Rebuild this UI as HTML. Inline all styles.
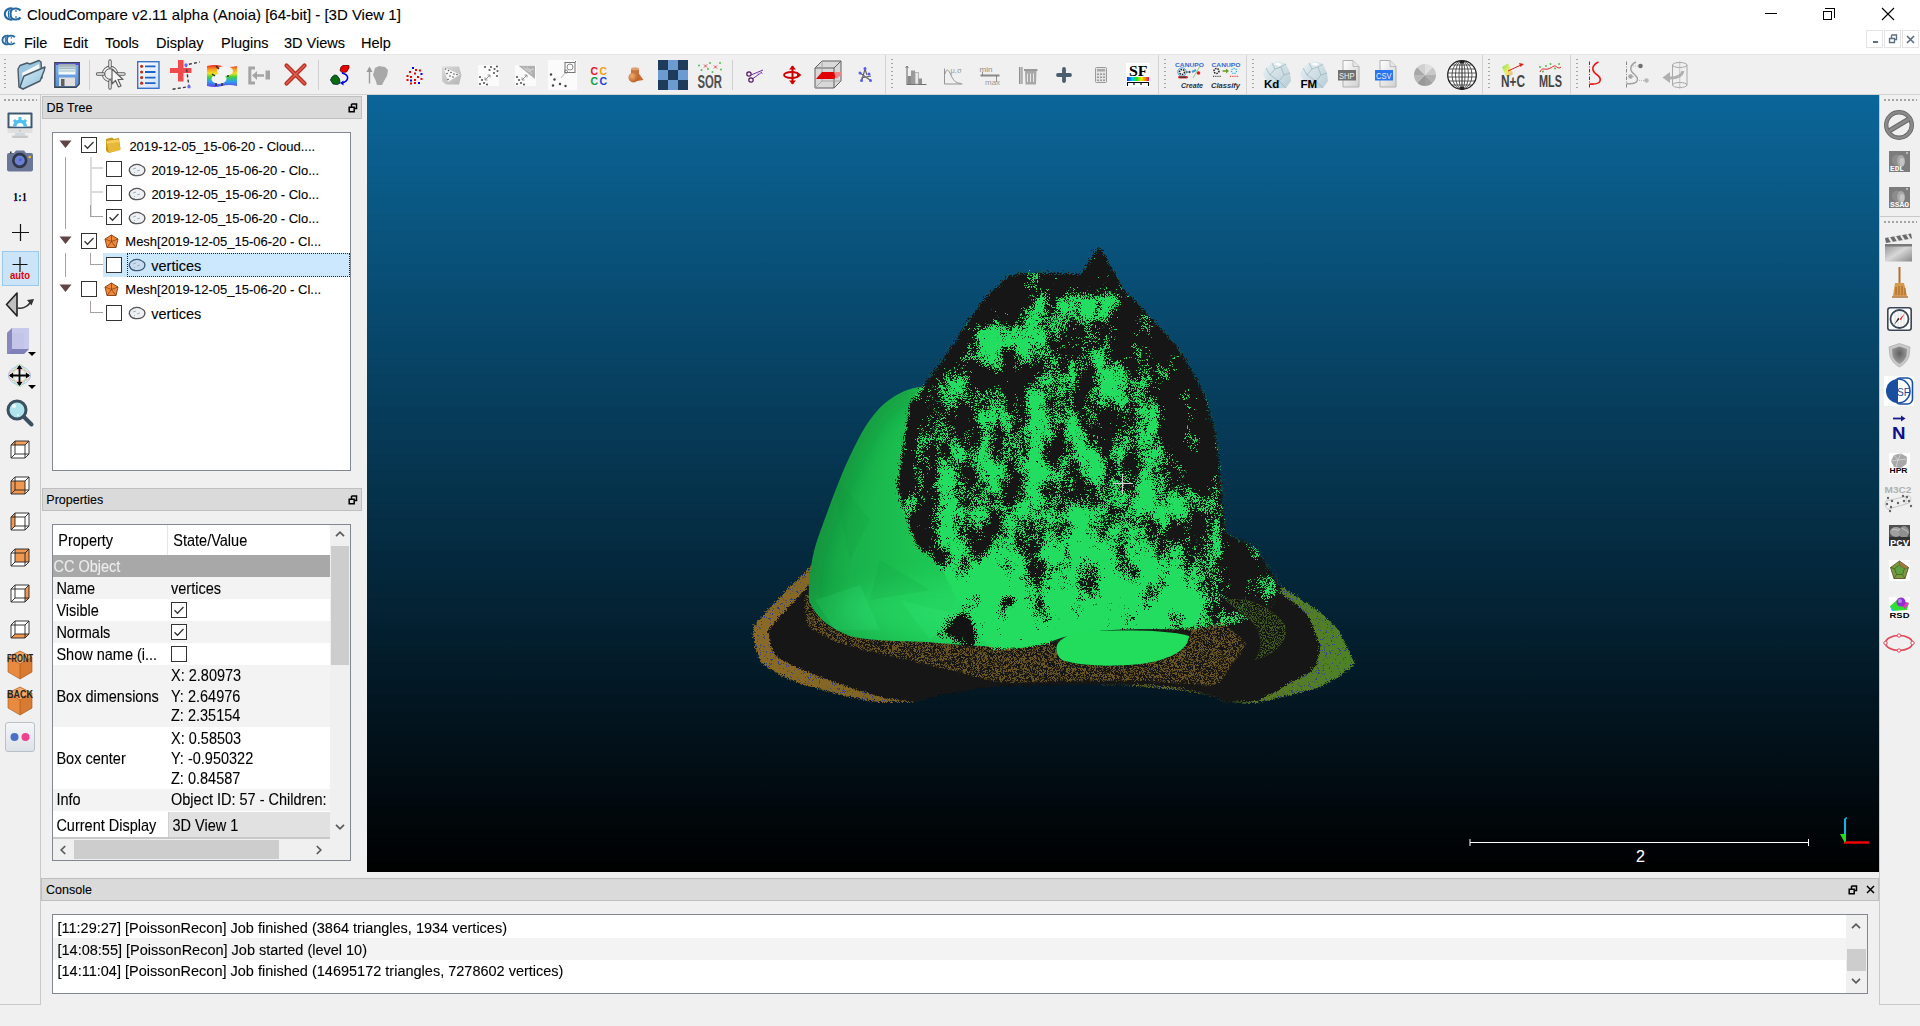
<!DOCTYPE html>
<html><head><meta charset="utf-8"><title>CloudCompare</title>
<style>
*{margin:0;padding:0;box-sizing:border-box}
html,body{width:1920px;height:1026px;overflow:hidden;background:#f0f0f0;font-family:"Liberation Sans",sans-serif;color:#000}
.a{position:absolute}
.t{position:absolute;white-space:pre;line-height:1}
svg.a{overflow:visible}
.dockt{position:absolute;background:#dadada;border:1px solid #bfbfbf}
.box{position:absolute;background:#fff;border:1px solid #828790}
.cb{position:absolute;width:16px;height:16px;border:1px solid #333;background:#fff}
.hdl{background-image:linear-gradient(#a0a0a0,#a0a0a0);background-size:2px 2px;background-repeat:no-repeat;}
.hdl{background:repeating-linear-gradient(to bottom,#a4a4a4 0 1.5px,transparent 1.5px 4px);width:2px!important}
.hdlh{background:repeating-linear-gradient(to right,#a4a4a4 0 2px,transparent 2px 4px);height:2px!important}
.t{-webkit-text-stroke:0.1px currentColor}

</style></head><body>
<!-- title bar -->
<div class="a" style="left:0;top:0;width:1920px;height:54px;background:#fff"></div>
<svg class="a" style="left:3px;top:7px" width="19" height="14" viewBox="0 0 19 14">
 <path d="M9.5,1.5 C6,1 2,2.5 1.8,7 C2,11.5 6,13 9.5,12.5" fill="none" stroke="#2468a4" stroke-width="2.1"/>
 <path d="M6.5,3 C5,4.5 5,9.5 6.5,11" fill="none" stroke="#2468a4" stroke-width="1.2"/>
 <path d="M17.5,3.5 C15.5,1 11,1 9,2.5 C7,4.5 7,9.5 9,11.5 C11,13 15.5,13 17.5,10.5" fill="none" stroke="#2468a4" stroke-width="2.1"/>
 <path d="M13,3 V5 M13,9 V11" stroke="#2468a4" stroke-width="1.2"/>
</svg>
<div class="t" style="left:27px;top:7px;font-size:15px;color:#000">CloudCompare v2.11 alpha (Anoia) [64-bit] - [3D View 1]</div>
<!-- window buttons -->
<div class="a" style="left:1765px;top:13px;width:12px;height:1px;background:#000"></div>
<div class="a" style="left:1823px;top:11px;width:9px;height:9px;border:1px solid #000"></div>
<div class="a" style="left:1825px;top:8px;width:10px;height:10px;border-top:1px solid #000;border-right:1px solid #000"></div>
<svg class="a" style="left:1881px;top:7px" width="14" height="14" viewBox="0 0 14 14"><path d="M1,1 L13,13 M13,1 L1,13" stroke="#000" stroke-width="1.1"/></svg>
<!-- menu -->
<svg class="a" style="left:1px;top:34px" width="15" height="12" viewBox="0 0 19 14">
 <path d="M9.5,1.5 C6,1 2,2.5 1.8,7 C2,11.5 6,13 9.5,12.5" fill="none" stroke="#2468a4" stroke-width="2.3"/>
 <path d="M6.5,3 C5,4.5 5,9.5 6.5,11" fill="none" stroke="#2468a4" stroke-width="1.3"/>
 <path d="M17.5,3.5 C15.5,1 11,1 9,2.5 C7,4.5 7,9.5 9,11.5 C11,13 15.5,13 17.5,10.5" fill="none" stroke="#2468a4" stroke-width="2.3"/>
 <path d="M13,3 V5 M13,9 V11" stroke="#2468a4" stroke-width="1.3"/>
</svg>
<div class="t" style="left:24px;top:35.5px;font-size:14.5px">File</div>
<div class="t" style="left:63px;top:35.5px;font-size:14.5px">Edit</div>
<div class="t" style="left:105px;top:35.5px;font-size:14.5px">Tools</div>
<div class="t" style="left:156px;top:35.5px;font-size:14.5px">Display</div>
<div class="t" style="left:221px;top:35.5px;font-size:14.5px">Plugins</div>
<div class="t" style="left:284px;top:35.5px;font-size:14.5px">3D Views</div>
<div class="t" style="left:361px;top:35.5px;font-size:14.5px">Help</div>
<!-- MDI buttons -->
<div class="a" style="left:1866px;top:30px;width:17px;height:18px;border:1px solid #e4e4e4;background:#fff"></div>
<div class="a" style="left:1873px;top:41px;width:5px;height:2px;background:#5b6e82"></div>
<div class="a" style="left:1884px;top:30px;width:17px;height:18px;border:1px solid #e4e4e4;background:#fff"></div>
<svg class="a" style="left:1888px;top:34px" width="10" height="10" viewBox="0 0 10 10"><path d="M3.5,1 H8.5 V5.5 H6.5 M1.5,4.5 H6.5 V8.5 H1.5 Z M3.5,1 V4.5" fill="none" stroke="#5b6e82" stroke-width="1.3"/></svg>
<div class="a" style="left:1902px;top:30px;width:17px;height:18px;border:1px solid #e4e4e4;background:#fff"></div>
<svg class="a" style="left:1906px;top:35px" width="9" height="9" viewBox="0 0 9 9"><path d="M1,1 L8,8 M8,1 L1,8" stroke="#5b6e82" stroke-width="1.7"/></svg>
<!-- toolbar -->
<div class="a" style="left:0;top:54px;width:1920px;height:1px;background:#e6e6e6"></div>
<div class="a" style="left:0;top:94px;width:1920px;height:1px;background:#d2d2d2"></div>
<!-- toolbar group separators -->
<div class="a" style="left:885px;top:55px;width:1px;height:39px;background:#d4d4d4"></div>
<div class="a" style="left:1158px;top:55px;width:1px;height:39px;background:#d4d4d4"></div>
<div class="a" style="left:1246px;top:55px;width:1px;height:39px;background:#d4d4d4"></div>
<div class="a" style="left:1482px;top:55px;width:1px;height:39px;background:#d4d4d4"></div>
<div class="a" style="left:1570px;top:55px;width:1px;height:39px;background:#d4d4d4"></div>
<!-- inner separators -->
<div class="a" style="left:89px;top:60px;width:1px;height:30px;background:#d0d0d0"></div>
<div class="a" style="left:318px;top:60px;width:1px;height:30px;background:#d0d0d0"></div>
<div class="a" style="left:732px;top:60px;width:1px;height:30px;background:#d0d0d0"></div>
<!-- handles -->
<div class="a hdl" style="left:4px;top:59px;width:3px;height:31px"></div>
<div class="a hdl" style="left:891px;top:59px;width:3px;height:31px"></div>
<div class="a hdl" style="left:1164px;top:59px;width:3px;height:31px"></div>
<div class="a hdl" style="left:1252px;top:59px;width:3px;height:31px"></div>
<div class="a hdl" style="left:1488px;top:59px;width:3px;height:31px"></div>
<div class="a hdl" style="left:1576px;top:59px;width:3px;height:31px"></div>
<div class="a hdlh" style="left:4px;top:99px;width:33px;height:3px"></div>
<div class="a hdlh" style="left:1884px;top:99px;width:33px;height:3px"></div>
<div class="a hdlh" style="left:1884px;top:221px;width:33px;height:3px"></div>
<!-- left toolbar border -->
<div class="a" style="left:40px;top:95px;width:1px;height:910px;background:#c9c9c9"></div>
<div class="a" style="left:0;top:1004px;width:41px;height:1px;background:#c9c9c9"></div>
<!-- right toolbar border -->
<div class="a" style="left:1879px;top:95px;width:1px;height:910px;background:#c9c9c9"></div>
<div class="a" style="left:1879px;top:1004px;width:41px;height:1px;background:#c9c9c9"></div>
<div class="a" style="left:1880px;top:216px;width:40px;height:1px;background:#c9c9c9"></div>

<div class="a" id="view" style="left:367px;top:95px;width:1512px;height:777px;background:linear-gradient(#0b6699,#000);overflow:hidden">
<svg width="1512" height="777" viewBox="367 95 1512 777" style="position:absolute;left:0;top:0">
<defs>
<linearGradient id="gm" x1="810" y1="0" x2="1220" y2="0" gradientUnits="userSpaceOnUse">
 <stop offset="0" stop-color="#17a646"/><stop offset="0.25" stop-color="#1cc252"/><stop offset="0.5" stop-color="#21d85c"/><stop offset="1" stop-color="#24e264"/>
</linearGradient>
<linearGradient id="rg" x1="750" y1="0" x2="1350" y2="0" gradientUnits="userSpaceOnUse">
 <stop offset="0" stop-color="#8a6a26"/><stop offset="0.5" stop-color="#6e5c22"/><stop offset="1" stop-color="#4e8226"/>
</linearGradient>
<linearGradient id="dg" x1="0" y1="240" x2="0" y2="650" gradientUnits="userSpaceOnUse">
 <stop offset="0" stop-color="#b8b8b8"/><stop offset="0.45" stop-color="#c0c0c0"/><stop offset="0.68" stop-color="#b0b0b0"/><stop offset="0.85" stop-color="#828282"/><stop offset="1" stop-color="#4a4a4a"/>
</linearGradient>
<filter id="fuzz2" filterUnits="userSpaceOnUse" x="730" y="540" width="640" height="180">
  <feTurbulence type="turbulence" baseFrequency="0.7" numOctaves="1" seed="8" result="t"/>
  <feDisplacementMap in="SourceGraphic" in2="t" scale="6" xChannelSelector="R" yChannelSelector="G"/>
</filter>
<filter id="fuzz" filterUnits="userSpaceOnUse" x="840" y="210" width="470" height="460">
  <feTurbulence type="turbulence" baseFrequency="0.6" numOctaves="1" seed="5" result="t"/>
  <feDisplacementMap in="SourceGraphic" in2="t" scale="9" xChannelSelector="R" yChannelSelector="G"/>
</filter>
<clipPath id="coneclip"><path id="conep" d="M1096,243 C1105,258 1112,272 1122,288 C1140,305 1158,325 1175,345 C1192,370 1203,392 1208,412 C1215,440 1217,460 1217,473 C1220,500 1222,520 1222,530 C1235,535 1248,542 1255,548 C1265,565 1275,578 1278,586 C1270,605 1250,615 1230,620 C1200,625 1150,628 1100,630 C1050,640 1010,645 990,646 C970,630 955,600 940,568 C930,555 920,548 915,545 C905,520 897,500 894,483 C898,460 902,430 907,400 L928,372 L946,347 L963,321 L981,296 L1006,272 C1030,268 1050,270 1077,271 C1085,262 1090,250 1096,243 Z"/></clipPath>
<filter id="blur12" x="-50%" y="-50%" width="200%" height="200%"><feGaussianBlur stdDeviation="12"/></filter>
<filter id="blur8" x="-50%" y="-50%" width="200%" height="200%"><feGaussianBlur stdDeviation="25"/></filter>
<filter id="spk" filterUnits="userSpaceOnUse" x="850" y="220" width="450" height="440" color-interpolation-filters="sRGB">
  <feTurbulence type="fractalNoise" baseFrequency="0.045 0.025" numOctaves="3" seed="11" result="c0"/>
  <feColorMatrix in="c0" type="matrix" values="1 0 0 0 0  1 0 0 0 0  1 0 0 0 0  0 0 0 0 1" result="coarse"/>
  <feTurbulence type="fractalNoise" baseFrequency="0.9" numOctaves="1" seed="2" result="f0"/>
  <feColorMatrix in="f0" type="matrix" values="1 0 0 0 0  1 0 0 0 0  1 0 0 0 0  0 0 0 0 1" result="fine"/>
  <feComposite in="coarse" in2="fine" operator="arithmetic" k2="1.0" k3="0.8" k4="-0.5" result="mix"/>
  <feComposite in="mix" in2="SourceGraphic" operator="arithmetic" k2="1" k3="0.8" k4="-0.55" result="biased"/>
  <feColorMatrix in="biased" type="matrix" values="0 0 0 0 0.075  0 0 0 0 0.075  0 0 0 0 0.075  30 0 0 0 -12" result="dark"/>
  <feComposite in="dark" in2="SourceAlpha" operator="in"/>
</filter>
<filter id="grain3" x="0" y="0" width="1" height="1" color-interpolation-filters="sRGB">
  <feTurbulence type="fractalNoise" baseFrequency="0.85" numOctaves="1" seed="13" result="f0"/>
  <feColorMatrix in="f0" type="matrix" values="1 0 0 0 0  1 0 0 0 0  1 0 0 0 0  0 0 0 0 1" result="f"/>
  <feColorMatrix in="f" type="matrix" values="0 0 0 0 0.2  0 0 0 0 0.25  0 0 0 0 0.55  14 0 0 0 -8.7" result="d"/>
  <feComposite in="d" in2="SourceAlpha" operator="in" result="dd"/>
  <feMerge><feMergeNode in="SourceGraphic"/><feMergeNode in="dd"/></feMerge>
</filter>
<filter id="grain2" x="0" y="0" width="1" height="1" color-interpolation-filters="sRGB">
  <feTurbulence type="fractalNoise" baseFrequency="0.9" numOctaves="1" seed="9" result="f0"/>
  <feColorMatrix in="f0" type="matrix" values="1 0 0 0 0  1 0 0 0 0  1 0 0 0 0  0 0 0 0 1" result="f"/>
  <feColorMatrix in="f" type="matrix" values="0 0 0 0 0.075  0 0 0 0 0.075  0 0 0 0 0.075  14 0 0 0 -6.3" result="d"/>
  <feComposite in="d" in2="SourceAlpha" operator="in" result="dd"/>
  <feMerge><feMergeNode in="SourceGraphic"/><feMergeNode in="dd"/></feMerge>
</filter>
<filter id="grain" x="0" y="0" width="1" height="1" color-interpolation-filters="sRGB">
  <feTurbulence type="fractalNoise" baseFrequency="0.8" numOctaves="1" seed="4" result="f0"/>
  <feColorMatrix in="f0" type="matrix" values="1 0 0 0 0  1 0 0 0 0  1 0 0 0 0  0 0 0 0 1" result="f"/>
  <feColorMatrix in="f" type="matrix" values="0 0 0 0 0.07  0 0 0 0 0.07  0 0 0 0 0.07  12 0 0 0 -6.6" result="d"/>
  <feComposite in="d" in2="SourceAlpha" operator="in" result="dd"/>
  <feMerge><feMergeNode in="SourceGraphic"/><feMergeNode in="dd"/></feMerge>
</filter>
</defs>
<g filter="url(#fuzz2)">
<!-- outer ring -->
<path d="M816,558 C795,578 768,603 751,625 C752,645 756,657 762,663 C780,675 800,683 810,685 C840,693 860,698 877,700 L913,700 C940,690 980,683 1021,681 C1080,681 1130,683 1161,686 C1190,689 1210,692 1224,700 L1253,701 C1280,695 1300,690 1316,686 C1330,678 1345,670 1352,662 C1348,650 1342,638 1337,629 C1325,615 1315,608 1306,602 C1290,590 1275,582 1259,576 L1240,540 L1000,560 Z" fill="url(#rg)" filter="url(#grain3)"/>
<!-- dark band -->
<path d="M818,572 C800,590 780,612 766,628 C767,640 770,650 775,655 C800,670 840,684 880,695 L913,700 C940,692 975,686 1000,684 C1060,682 1120,682 1160,684 C1190,688 1210,692 1224,700 L1253,699 C1270,692 1286,682 1290,680 C1305,672 1312,667 1313,664 C1317,655 1318,648 1317,641 C1312,625 1307,615 1302,610 C1290,598 1275,588 1259,580 L1240,545 L1000,560 Z" fill="#131313"/>
<!-- front brown ground -->
<path d="M804,592 C802,608 804,620 808,626 C828,638 850,646 880,652 C920,660 960,672 1000,680 C1060,679 1120,678 1165,680 C1190,682 1205,684 1214,684 C1225,670 1235,655 1245,642 L1200,600 L1000,600 Z" fill="#6a5620" filter="url(#grain2)"/>
</g>
<!-- green mesh -->
<path id="dome" d="M809,600 C808,580 812,555 818,538 C830,505 842,470 858,440 C868,420 880,405 895,396 C905,390 915,387 923,387 C935,388 942,392 948,398 L1000,380 L1150,420 L1200,500 L1225,540 L1260,560 C1240,590 1225,605 1210,614 C1190,622 1175,624 1161,624 C1120,628 1090,632 1068,634 C1050,641 1035,646 1021,648 C980,646 950,644 927,642 C890,641 865,640 850,636 C828,628 814,615 809,600 Z" fill="url(#gm)"/>
<clipPath id="domeclip"><use href="#dome"/></clipPath>
<g clip-path="url(#domeclip)">
 <path d="M809,600 C808,580 812,555 818,538 C830,505 842,470 858,440 C868,420 880,405 895,396 C905,390 915,387 923,387" fill="none" stroke="#0e7a32" stroke-width="22" opacity="0.55" filter="url(#blur12)"/>
 <ellipse cx="930" cy="610" rx="90" ry="28" fill="#30f078" opacity="0.35" filter="url(#blur12)"/>
 <path d="M830,470 L870,520 L850,560 Z M880,560 L930,590 L870,600 Z M900,430 L940,470 L905,500 Z" fill="#108a38" opacity="0.12"/>
 <path d="M815,600 L860,585 L880,630 L835,630 Z M900,600 L960,615 L930,640 Z" fill="#40ff90" opacity="0.12"/>
</g>
<g filter="url(#fuzz)">
<use href="#conep" fill="#22dd5e"/>
<g clip-path="url(#coneclip)" filter="url(#spk)">
 <rect x="850" y="220" width="450" height="440" fill="url(#dg)"/>
 <path d="M930,560 C910,530 897,500 894,483 C898,460 902,430 907,400 L928,372 L946,347 L963,321 L981,296 L1006,272 C1030,268 1050,270 1077,271 C1085,262 1090,250 1096,243 C1105,258 1112,272 1122,288 C1140,305 1158,325 1175,345 C1192,370 1203,392 1208,412 C1215,440 1217,460 1217,473 C1220,500 1222,520 1222,530 C1235,535 1248,542 1255,548 C1265,565 1275,578 1278,586" fill="none" stroke="#fff" stroke-width="40" filter="url(#blur12)"/>
 <ellipse cx="1050" cy="262" rx="70" ry="18" fill="#fff" filter="url(#blur12)"/>
 <ellipse cx="1245" cy="575" rx="42" ry="48" fill="#fff" filter="url(#blur12)"/>
 <path d="M1122,300 C1150,330 1190,380 1200,430 C1205,470 1205,510 1215,540" fill="none" stroke="#fff" stroke-width="45" filter="url(#blur12)"/>
</g>
</g>
<path d="M1050,642 C1075,631 1120,627 1188,630 C1192,633 1191,636 1189,638 C1150,633 1090,634 1054,646 Z" fill="#151515" opacity="0.85"/>
<path d="M1225,600 C1250,595 1275,610 1285,625 C1290,640 1275,655 1255,660 C1265,645 1262,625 1240,612 Z" fill="#4a6a22" filter="url(#grain2)" opacity="0.8"/>
<radialGradient id="spotg"><stop offset="0" stop-color="#fff"/><stop offset="0.5" stop-color="#d0d0d0"/><stop offset="1" stop-color="#707070"/></radialGradient>
<g filter="url(#spk)"><ellipse cx="962" cy="630" rx="26" ry="18" fill="url(#spotg)"/><ellipse cx="1010" cy="600" rx="12" ry="9" fill="url(#spotg)"/></g>
<!-- green pool -->
<path d="M1058,643 C1065,635 1075,632 1090,631 C1130,630 1170,630 1189,636 C1188,650 1170,660 1140,664 C1110,667 1080,666 1062,660 C1056,655 1055,648 1058,643 Z" fill="#22dd5c"/>
</svg>
<svg class="a" style="left:0;top:0" width="1512" height="777" viewBox="367 95 1512 777">
<path d="M1113,483.5 H1133 M1122.5,474 V494" stroke="#d8d0d8" stroke-width="1"/>
<path d="M1470,842.5 H1809 M1470,839 V846 M1808.5,839 V846" stroke="#fff" stroke-width="1"/>
<path d="M1845,819 V843" stroke="#10b4f0" stroke-width="2"/><path d="M1845,819 Q1845,818 1847,818" stroke="#10b4f0" stroke-width="1.5" fill="none"/>
<path d="M1844,842.5 H1869" stroke="#f00000" stroke-width="2.5"/>
<path d="M1840,834 L1845,834 L1845,843 Z" fill="#20e020"/>
</svg>
<div class="t" style="left:1269px;top:754px;font-size:16px;color:#fff">2</div>

</div>
<div class="dockt" style="left:42px;top:96px;width:320px;height:23px"></div>
<div class="t" style="left:46.5px;top:101.9px;font-size:12.5px;color:#000;">DB Tree</div>
<svg class="a" style="left:348px;top:103px" width="10" height="10" viewBox="0 0 10 10"><path d="M3.5,1 H8.5 V5.5 H7 M1.2,4.2 H6.2 V8.8 H1.2 Z" fill="none" stroke="#000" stroke-width="1.5"/><path d="M3.5,1 V4" stroke="#000" stroke-width="1.5"/></svg><div class="box" style="left:52px;top:132px;width:299px;height:339px"></div>
<div class="a" style="left:65px;top:157px;width:1px;height:72px;background:#a8a0a0"></div>
<div class="a" style="left:90px;top:157px;width:2px;height:59px;background:#dcdcdc"></div>
<div class="a" style="left:90px;top:167px;width:13px;height:2px;background:#dcdcdc"></div>
<div class="a" style="left:90px;top:191px;width:13px;height:2px;background:#dcdcdc"></div>
<div class="a" style="left:90px;top:205px;width:1px;height:12px;background:#a8a0a0"></div>
<div class="a" style="left:90px;top:216px;width:13px;height:1px;background:#a8a0a0"></div>
<div class="a" style="left:65px;top:253px;width:1px;height:24px;background:#a8a0a0"></div>
<div class="a" style="left:90px;top:253px;width:1px;height:12px;background:#a8a0a0"></div>
<div class="a" style="left:90px;top:264px;width:13px;height:1px;background:#a8a0a0"></div>
<div class="a" style="left:90px;top:301px;width:1px;height:12px;background:#a8a0a0"></div>
<div class="a" style="left:90px;top:312px;width:13px;height:1px;background:#a8a0a0"></div>
<svg class="a" style="left:59px;top:140px" width="13" height="9" viewBox="0 0 13 9"><path d="M0.5,0.5 H12.5 L6.5,8 Z" fill="#5e4646"/></svg>
<div class="cb" style="left:81px;top:137px;border-color:#333"></div><svg class="a" style="left:81px;top:137px" width="16" height="16" viewBox="0 0 16 16"><path d="M3.5,8.2 L6.5,11.2 L12.5,5" fill="none" stroke="#333" stroke-width="1.3"/></svg>
<svg class="a" style="left:104px;top:136px" width="18" height="18" viewBox="0 0 18 18"><path d="M2,3 L8,1.5 L10,3 L15,2 L16.5,13 L5,17 L2,15 Z" fill="#c89a1a"/><path d="M2.5,5 L14.5,3.5 L16.5,14 L5,17 Z" fill="#e8b838"/><path d="M2.5,5 L14.5,3.5 L15,6 L3,7.5 Z" fill="#f5cf60"/></svg>
<div class="t" style="left:129.4px;top:139.7px;font-size:13px;color:#000;">2019-12-05_15-06-20 - Cloud....</div>
<div class="cb" style="left:106px;top:161px;border-color:#333"></div>
<svg class="a" style="left:128px;top:163px" width="18" height="14" viewBox="0 0 18 14"><path d="M2,9 C0.5,7 1.5,4 4,3 C6,1 11,1 13,2.5 C16,3.5 17.5,6 16.5,9 C15,12 11,13 7,12.5 C4,12 2.5,11 2,9 Z" fill="#eef0f4" stroke="#555" stroke-width="1.3"/><path d="M5,6 L8,5 M9,8 L12,7 M6,9 L7,10" stroke="#8aa" stroke-width="0.8"/></svg>
<div class="t" style="left:151.4px;top:163.7px;font-size:13px;color:#000;">2019-12-05_15-06-20 - Clo...</div>
<div class="cb" style="left:106px;top:185px;border-color:#333"></div>
<svg class="a" style="left:128px;top:187px" width="18" height="14" viewBox="0 0 18 14"><path d="M2,9 C0.5,7 1.5,4 4,3 C6,1 11,1 13,2.5 C16,3.5 17.5,6 16.5,9 C15,12 11,13 7,12.5 C4,12 2.5,11 2,9 Z" fill="#eef0f4" stroke="#555" stroke-width="1.3"/><path d="M5,6 L8,5 M9,8 L12,7 M6,9 L7,10" stroke="#8aa" stroke-width="0.8"/></svg>
<div class="t" style="left:151.4px;top:187.7px;font-size:13px;color:#000;">2019-12-05_15-06-20 - Clo...</div>
<div class="cb" style="left:106px;top:209px;border-color:#333"></div><svg class="a" style="left:106px;top:209px" width="16" height="16" viewBox="0 0 16 16"><path d="M3.5,8.2 L6.5,11.2 L12.5,5" fill="none" stroke="#333" stroke-width="1.3"/></svg>
<svg class="a" style="left:128px;top:211px" width="18" height="14" viewBox="0 0 18 14"><path d="M2,9 C0.5,7 1.5,4 4,3 C6,1 11,1 13,2.5 C16,3.5 17.5,6 16.5,9 C15,12 11,13 7,12.5 C4,12 2.5,11 2,9 Z" fill="#eef0f4" stroke="#555" stroke-width="1.3"/><path d="M5,6 L8,5 M9,8 L12,7 M6,9 L7,10" stroke="#8aa" stroke-width="0.8"/></svg>
<div class="t" style="left:151.4px;top:211.7px;font-size:13px;color:#000;">2019-12-05_15-06-20 - Clo...</div>
<svg class="a" style="left:59px;top:236px" width="13" height="9" viewBox="0 0 13 9"><path d="M0.5,0.5 H12.5 L6.5,8 Z" fill="#5e4646"/></svg>
<div class="cb" style="left:81px;top:233px;border-color:#333"></div><svg class="a" style="left:81px;top:233px" width="16" height="16" viewBox="0 0 16 16"><path d="M3.5,8.2 L6.5,11.2 L12.5,5" fill="none" stroke="#333" stroke-width="1.3"/></svg>
<svg class="a" style="left:104px;top:234px" width="15" height="15" viewBox="0 0 15 15"><path d="M7.5,1 L14,5 L12,13.5 L3,13.5 L1,5 Z" fill="#f0883a" stroke="#8a4a20" stroke-width="1"/><path d="M7.5,1 L7.5,7.5 L14,5 M7.5,7.5 L12,13.5 M7.5,7.5 L3,13.5 M7.5,7.5 L1,5" stroke="#7a3a10" stroke-width="0.7" fill="none"/></svg>
<div class="t" style="left:125.3px;top:235.4px;font-size:13px;color:#000;">Mesh[2019-12-05_15-06-20 - Cl...</div>
<div class="a" style="left:103px;top:253px;width:247px;height:24px;background:#cce8ff"></div>
<div class="a" style="left:127px;top:253px;width:223px;height:24px;border:1px dotted #222"></div>
<div class="cb" style="left:106px;top:257px;border-color:#333"></div>
<svg class="a" style="left:128px;top:258px" width="18" height="14" viewBox="0 0 18 14"><path d="M2,9 C0.5,7 1.5,4 4,3 C6,1 11,1 13,2.5 C16,3.5 17.5,6 16.5,9 C15,12 11,13 7,12.5 C4,12 2.5,11 2,9 Z" fill="#c9dcef" stroke="#3d5a78" stroke-width="1.3"/><path d="M5,6 L8,5 M9,8 L12,7 M6,9 L7,10" stroke="#8aa" stroke-width="0.8"/></svg>
<div class="t" style="left:151.3px;top:258.5px;font-size:14.5px;color:#000;">vertices</div>
<svg class="a" style="left:59px;top:284px" width="13" height="9" viewBox="0 0 13 9"><path d="M0.5,0.5 H12.5 L6.5,8 Z" fill="#5e4646"/></svg>
<div class="cb" style="left:81px;top:281px;border-color:#333"></div>
<svg class="a" style="left:104px;top:282px" width="15" height="15" viewBox="0 0 15 15"><path d="M7.5,1 L14,5 L12,13.5 L3,13.5 L1,5 Z" fill="#f0883a" stroke="#8a4a20" stroke-width="1"/><path d="M7.5,1 L7.5,7.5 L14,5 M7.5,7.5 L12,13.5 M7.5,7.5 L3,13.5 M7.5,7.5 L1,5" stroke="#7a3a10" stroke-width="0.7" fill="none"/></svg>
<div class="t" style="left:125.3px;top:283.4px;font-size:13px;color:#000;">Mesh[2019-12-05_15-06-20 - Cl...</div>
<div class="cb" style="left:106px;top:305px;border-color:#333"></div>
<svg class="a" style="left:128px;top:306px" width="18" height="14" viewBox="0 0 18 14"><path d="M2,9 C0.5,7 1.5,4 4,3 C6,1 11,1 13,2.5 C16,3.5 17.5,6 16.5,9 C15,12 11,13 7,12.5 C4,12 2.5,11 2,9 Z" fill="#eef0f4" stroke="#555" stroke-width="1.3"/><path d="M5,6 L8,5 M9,8 L12,7 M6,9 L7,10" stroke="#8aa" stroke-width="0.8"/></svg>
<div class="t" style="left:151.3px;top:306.5px;font-size:14.5px;color:#000;">vertices</div>
<div class="dockt" style="left:42px;top:488px;width:320px;height:23px"></div>
<div class="t" style="left:46.3px;top:493.9px;font-size:12.5px;color:#000;">Properties</div>
<svg class="a" style="left:348px;top:495px" width="10" height="10" viewBox="0 0 10 10"><path d="M3.5,1 H8.5 V5.5 H7 M1.2,4.2 H6.2 V8.8 H1.2 Z" fill="none" stroke="#000" stroke-width="1.5"/><path d="M3.5,1 V4" stroke="#000" stroke-width="1.5"/></svg><div class="box" style="left:52px;top:524px;width:299px;height:337px;overflow:hidden"></div>
<div class="a" style="left:167px;top:525px;width:1px;height:30px;background:#e5e5e5"></div>
<div class="t" style="left:58.3px;top:533.9px;font-size:14.5px;color:#000;transform:scaleY(1.08);transform-origin:0 85%">Property</div>
<div class="t" style="left:173.3px;top:533.9px;font-size:14.5px;color:#000;transform:scaleY(1.08);transform-origin:0 85%">State/Value</div>
<div class="a" style="left:53px;top:555px;width:277px;height:22px;background:#a8a8a8"></div>
<div class="t" style="left:53.5px;top:560.2px;font-size:14.5px;color:#ececec;transform:scaleY(1.08);transform-origin:0 85%">CC Object</div>
<div class="a" style="left:53px;top:577px;width:277px;height:22px;background:#f3f3f3"></div>
<div class="a" style="left:53px;top:599px;width:277px;height:22px;background:#fff"></div>
<div class="a" style="left:53px;top:621px;width:277px;height:22px;background:#f3f3f3"></div>
<div class="a" style="left:53px;top:643px;width:277px;height:22px;background:#fff"></div>
<div class="a" style="left:53px;top:665px;width:277px;height:62px;background:#f3f3f3"></div>
<div class="a" style="left:53px;top:727px;width:277px;height:62px;background:#fff"></div>
<div class="a" style="left:53px;top:789px;width:277px;height:22px;background:#f3f3f3"></div>
<div class="a" style="left:53px;top:811px;width:277px;height:26px;background:#fff"></div>
<div class="t" style="left:56.4px;top:582.2px;font-size:14.5px;color:#000;transform:scaleY(1.08);transform-origin:0 85%">Name</div>
<div class="t" style="left:171px;top:582.2px;font-size:14.5px;color:#000;transform:scaleY(1.08);transform-origin:0 85%">vertices</div>
<div class="t" style="left:56.4px;top:604.2px;font-size:14.5px;color:#000;transform:scaleY(1.08);transform-origin:0 85%">Visible</div>
<div class="cb" style="left:171px;top:602px;border-color:#333"></div><svg class="a" style="left:171px;top:602px" width="16" height="16" viewBox="0 0 16 16"><path d="M3.5,8.2 L6.5,11.2 L12.5,5" fill="none" stroke="#333" stroke-width="1.3"/></svg>
<div class="t" style="left:56.4px;top:626.2px;font-size:14.5px;color:#000;transform:scaleY(1.08);transform-origin:0 85%">Normals</div>
<div class="cb" style="left:171px;top:624px;border-color:#333"></div><svg class="a" style="left:171px;top:624px" width="16" height="16" viewBox="0 0 16 16"><path d="M3.5,8.2 L6.5,11.2 L12.5,5" fill="none" stroke="#333" stroke-width="1.3"/></svg>
<div class="t" style="left:56.4px;top:648.2px;font-size:14.5px;color:#000;transform:scaleY(1.08);transform-origin:0 85%">Show name (i...</div>
<div class="cb" style="left:171px;top:646px;border-color:#333"></div>
<div class="t" style="left:56.4px;top:689.7px;font-size:14.5px;color:#000;transform:scaleY(1.08);transform-origin:0 85%">Box dimensions</div>
<div class="t" style="left:171px;top:669.3px;font-size:14.5px;color:#000;transform:scaleY(1.08);transform-origin:0 85%">X: 2.80973</div>
<div class="t" style="left:171px;top:689.5px;font-size:14.5px;color:#000;transform:scaleY(1.08);transform-origin:0 85%">Y: 2.64976</div>
<div class="t" style="left:171px;top:709.3px;font-size:14.5px;color:#000;transform:scaleY(1.08);transform-origin:0 85%">Z: 2.35154</div>
<div class="t" style="left:56.4px;top:751.7px;font-size:14.5px;color:#000;transform:scaleY(1.08);transform-origin:0 85%">Box center</div>
<div class="t" style="left:171px;top:731.5px;font-size:14.5px;color:#000;transform:scaleY(1.08);transform-origin:0 85%">X: 0.58503</div>
<div class="t" style="left:171px;top:751.5px;font-size:14.5px;color:#000;transform:scaleY(1.08);transform-origin:0 85%">Y: -0.950322</div>
<div class="t" style="left:171px;top:771.5px;font-size:14.5px;color:#000;transform:scaleY(1.08);transform-origin:0 85%">Z: 0.84587</div>
<div class="t" style="left:56.4px;top:793.3px;font-size:14.5px;color:#000;transform:scaleY(1.08);transform-origin:0 85%">Info</div>
<div class="a" style="left:171px;top:790px;width:158px;height:21px;overflow:hidden"><div class="t" style="left:0px;top:3.3px;font-size:14.5px;color:#000;transform:scaleY(1.08);transform-origin:0 85%">Object ID: 57 - Children: 0</div>
</div>
<div class="a" style="left:168px;top:812px;width:162px;height:25px;background:#e1e1e1;border-left:1px solid #d0d0d0"></div>
<div class="t" style="left:56.4px;top:818.9px;font-size:14.5px;color:#000;transform:scaleY(1.08);transform-origin:0 85%">Current Display</div>
<div class="t" style="left:172.5px;top:818.9px;font-size:14.5px;color:#000;transform:scaleY(1.08);transform-origin:0 85%">3D View 1</div>
<div class="a" style="left:53px;top:837px;width:277px;height:2px;background:#c8c8c8"></div>
<div class="a" style="left:330px;top:525px;width:20px;height:314px;background:#f0f0f0"></div>
<div class="a" style="left:331px;top:546px;width:18px;height:119px;background:#cdcdcd"></div>
<svg class="a" style="left:335px;top:531px" width="10" height="6" viewBox="0 0 10 6"><path d="M1,5.2 L5,1.2 L9,5.2" fill="none" stroke="#5a5a5a" stroke-width="1.7"/></svg>
<svg class="a" style="left:335px;top:824px" width="10" height="6" viewBox="0 0 10 6"><path d="M1,0.8 L5,4.8 L9,0.8" fill="none" stroke="#5a5a5a" stroke-width="1.7"/></svg>
<div class="a" style="left:53px;top:839px;width:297px;height:21px;background:#f0f0f0"></div>
<div class="a" style="left:74px;top:840px;width:205px;height:19px;background:#cdcdcd"></div>
<svg class="a" style="left:60px;top:845px" width="6" height="10" viewBox="0 0 6 10"><path d="M5.2,1 L1.2,5 L5.2,9" fill="none" stroke="#5a5a5a" stroke-width="1.7"/></svg>
<svg class="a" style="left:316px;top:845px" width="6" height="10" viewBox="0 0 6 10"><path d="M0.8,1 L4.8,5 L0.8,9" fill="none" stroke="#5a5a5a" stroke-width="1.7"/></svg>
<div class="dockt" style="left:41px;top:878px;width:1838px;height:23px"></div>
<div class="t" style="left:46px;top:883.9px;font-size:12.5px;color:#000;">Console</div>
<svg class="a" style="left:1848px;top:885px" width="10" height="10" viewBox="0 0 10 10"><path d="M3.5,1 H8.5 V5.5 H7 M1.2,4.2 H6.2 V8.8 H1.2 Z" fill="none" stroke="#000" stroke-width="1.5"/><path d="M3.5,1 V4" stroke="#000" stroke-width="1.5"/></svg><svg class="a" style="left:1866px;top:885px" width="9" height="9" viewBox="0 0 9 9"><path d="M1,1 L8,8 M8,1 L1,8" stroke="#000" stroke-width="1.5"/></svg>
<div class="box" style="left:52px;top:914px;width:1816px;height:80px"></div>
<div class="a" style="left:53px;top:938px;width:1793px;height:22px;background:#f3f3f3"></div>
<div class="t" style="left:57.5px;top:921.0px;font-size:14.5px;color:#000;transform:scaleY(1.05);transform-origin:0 85%">[11:29:27] [PoissonRecon] Job finished (3864 triangles, 1934 vertices)</div>
<div class="t" style="left:57.5px;top:942.7px;font-size:14.5px;color:#000;transform:scaleY(1.05);transform-origin:0 85%">[14:08:55] [PoissonRecon] Job started (level 10)</div>
<div class="t" style="left:57.5px;top:964.3px;font-size:14.5px;color:#000;transform:scaleY(1.05);transform-origin:0 85%">[14:11:04] [PoissonRecon] Job finished (14695172 triangles, 7278602 vertices)</div>
<div class="a" style="left:1846px;top:915px;width:21px;height:78px;background:#f0f0f0"></div>
<div class="a" style="left:1847px;top:949px;width:19px;height:22px;background:#cdcdcd"></div>
<svg class="a" style="left:1851px;top:923px" width="10" height="6" viewBox="0 0 10 6"><path d="M1,5.2 L5,1.2 L9,5.2" fill="none" stroke="#5a5a5a" stroke-width="1.7"/></svg>
<svg class="a" style="left:1851px;top:978px" width="10" height="6" viewBox="0 0 10 6"><path d="M1,0.8 L5,4.8 L9,0.8" fill="none" stroke="#5a5a5a" stroke-width="1.7"/></svg>
<svg class="a" style="left:16px;top:59px" width="30" height="31" viewBox="0 0 30 31"><defs><linearGradient id="fo1" x1="0" y1="0" x2="1" y2="1"><stop offset="0" stop-color="#d8ecf6"/><stop offset="1" stop-color="#8fc0dc"/></linearGradient></defs>
<path d="M2,10 L4,6.5 L11,4 L14,5 L23,1.5 L25,3 L26,19 L7,30 L3,28 Z" fill="#9cc6e0" stroke="#4a5a66" stroke-width="1.4" stroke-linejoin="round"/>
<path d="M6,14 L23,5 L24,17 L8,26 Z" fill="#f4f6f8"/>
<path d="M4,28 L8,17 L29,8 L28,12 L24,22 L7,30 Z" fill="url(#fo1)" stroke="#4a5a66" stroke-width="1.4" stroke-linejoin="round"/></svg>
<svg class="a" style="left:54px;top:62px" width="27" height="27" viewBox="0 0 27 27"><defs><linearGradient id="fl1" x1="0" y1="0" x2="0" y2="1"><stop offset="0" stop-color="#7fb2f0"/><stop offset="1" stop-color="#5a8fd8"/></linearGradient><linearGradient id="fl2" x1="0" y1="0" x2="0" y2="1"><stop offset="0" stop-color="#9aa8b0"/><stop offset="0.6" stop-color="#d8f0f4"/><stop offset="1" stop-color="#ffffff"/></linearGradient></defs>
<path d="M0.8,0.8 H25.2 V22 L22,25.2 H0.8 Z" fill="url(#fl1)" stroke="#3a4450" stroke-width="1.4"/>
<path d="M1.5,1.2 H25 V3 H1.5 Z" fill="#5a4ad0"/>
<rect x="4.5" y="2" width="17" height="10.5" fill="url(#fl2)"/>
<path d="M5,4 H21 M5,6.5 H21 M5,9 H21" stroke="#a0b0b4" stroke-width="0.8"/>
<rect x="5" y="15.5" width="16" height="8.5" fill="#e0e0e0"/>
<rect x="7" y="17" width="3.5" height="7" fill="#606060"/></svg>
<svg class="a" style="left:97px;top:60px" width="29" height="29" viewBox="0 0 29 29"><circle cx="13" cy="14" r="6.5" fill="none" stroke="#5a5a5a" stroke-width="3.4"/><circle cx="13" cy="14" r="6.5" fill="none" stroke="#f4f4f4" stroke-width="1.6"/>
<path d="M13,1 V7 M13,21 V28 M0.5,14 H6.5 M19.5,14 H27" stroke="#5a5a5a" stroke-width="3.4" stroke-linecap="round"/>
<path d="M13,1 V7 M13,21 V28 M0.5,14 H6.5 M19.5,14 H27" stroke="#f4f4f4" stroke-width="1.5" stroke-linecap="round"/>
<path d="M15,9 L15,24 L18.5,20.5 L21.5,27 L24,26 L21,19.5 L26,19.5 Z" fill="#f8f8f8" stroke="#606060" stroke-width="1.2" stroke-linejoin="round"/></svg>
<svg class="a" style="left:137px;top:61px" width="23" height="28" viewBox="0 0 23 28"><defs><linearGradient id="li1" x1="0" y1="0" x2="1" y2="1"><stop offset="0" stop-color="#ffffff"/><stop offset="1" stop-color="#cfe0f8"/></linearGradient></defs>
<rect x="0.7" y="0.7" width="21.3" height="26.6" fill="url(#li1)" stroke="#3a72c8" stroke-width="1.4"/>
<g fill="#c8301a"><circle cx="4.6" cy="5.3" r="1.6"/><circle cx="4.6" cy="11" r="1.6"/><circle cx="4.6" cy="16.6" r="1.6"/><circle cx="4.6" cy="22.2" r="1.6"/></g>
<g stroke="#1a64c8" stroke-width="1.8"><path d="M8,5.3 H18.5 M8,11 H18.5 M8,16.6 H18.5 M8,22.2 H18.5"/></g></svg>
<svg class="a" style="left:170px;top:60px" width="31" height="31" viewBox="0 0 31 31"><rect x="8" y="0" width="5.5" height="21.5" fill="#f04a4e"/><rect x="0" y="8" width="21.5" height="5" fill="#f04a4e"/>
<path d="M2.6,29.2 L19,26.7 L16,4.9 L29.8,2" fill="none" stroke="#3a3a3a" stroke-width="1.4" stroke-dasharray="3,2.2"/>
<circle cx="19" cy="26.7" r="1.7" fill="#6a6af0"/><circle cx="16" cy="4.9" r="1.7" fill="#6a6af0"/></svg>
<svg class="a" style="left:207px;top:63px" width="31" height="25" viewBox="0 0 31 25"><defs><linearGradient id="rb" x1="0" y1="0" x2="0" y2="1"><stop offset="0" stop-color="#f02020"/><stop offset="0.2" stop-color="#f8a020"/><stop offset="0.38" stop-color="#f0e020"/><stop offset="0.55" stop-color="#40d040"/><stop offset="0.75" stop-color="#30a0f0"/><stop offset="1" stop-color="#6040f0"/></linearGradient></defs>
<path d="M0,3 Q8,1 15,3 T30,3 V23 Q22,21 15,23 T0,23 Z" fill="url(#rb)"/>
<ellipse cx="18" cy="8" rx="8" ry="5" fill="#f4f4f4"/><ellipse cx="12" cy="16" rx="7.5" ry="5" fill="#f4f4f4"/>
<path d="M9,3 L12,6 M5,11 L8,13 M21,12 V14 M9,20 V23 M15,20 V23" stroke="#303030" stroke-width="1.5"/></svg>
<svg class="a" style="left:249px;top:67px" width="22" height="17" viewBox="0 0 22 17"><path d="M6,1 H0.8 V16 H6" fill="none" stroke="#a4a4a4" stroke-width="3"/><path d="M3,8.5 L8,4 V13 Z" fill="#a4a4a4"/><path d="M7,8.5 H15" stroke="#a4a4a4" stroke-width="2.5"/><rect x="16.5" y="3.5" width="4.5" height="9" fill="#a4a4a4"/></svg>
<svg class="a" style="left:284px;top:63px" width="23" height="23" viewBox="0 0 23 23"><path d="M2.5,2.5 L20.5,20.5 M20.5,2.5 L2.5,20.5" stroke="#b83024" stroke-width="4.2" stroke-linecap="round"/><path d="M2.5,2.5 L20.5,20.5 M20.5,2.5 L2.5,20.5" stroke="#e06050" stroke-width="1.6" stroke-linecap="round"/></svg>
<svg class="a" style="left:330px;top:65px" width="20" height="21" viewBox="0 0 20 21"><path d="M11,2 L13,0.5 H19 V3 L16.5,7 L12,7.4 L10,5.5 Z" fill="#f00000" stroke="#5a0000" stroke-width="0.8"/>
<path d="M2,12 L4.5,10 L7,10.5 L9.5,14 L10,18 L7.5,19.5 L3,19 L0.5,15 Z" fill="#0a6a10" stroke="#003030" stroke-width="0.9"/>
<path d="M12,8 C20,10 19,16 12,18" fill="none" stroke="#0000f0" stroke-width="1.6"/><path d="M10,18 L13.5,15.5 L13.5,20.5 Z" fill="#0000f0"/></svg>
<svg class="a" style="left:366px;top:66px" width="23" height="20" viewBox="0 0 23 20"><path d="M3.5,17.5 V2" stroke="#9a9a9a" stroke-width="1.4"/><path d="M0.5,6 L3.5,0.5 L6.5,6 Z" fill="#9a9a9a"/>
<path d="M9,2 L13,0 L19,1 L22,4 L21,10 L18,15 L16,19 L11,19 L9.5,14 L7,9 Z" fill="#a8a8a8"/></svg>
<svg class="a" style="left:405px;top:66px" width="18" height="19" viewBox="0 0 18 19"><rect x="10" y="3" width="2" height="2" fill="#f00000"/><rect x="14" y="3.5" width="2" height="2" fill="#f00000"/><rect x="4" y="5" width="2" height="2" fill="#f00000"/><rect x="9" y="6.5" width="2" height="2" fill="#f00000"/><rect x="1.5" y="9" width="2" height="2" fill="#f00000"/><rect x="5" y="10" width="2" height="2" fill="#f00000"/><rect x="12" y="10" width="2" height="2" fill="#f00000"/><rect x="15.5" y="12" width="2" height="2" fill="#f00000"/><rect x="1.5" y="13" width="2" height="2" fill="#f00000"/><rect x="9" y="13" width="2" height="2" fill="#f00000"/><rect x="5" y="16.5" width="2" height="2" fill="#f00000"/><rect x="9" y="16" width="2" height="2" fill="#f00000"/><rect x="7" y="1" width="2" height="2" fill="#0000f0"/><rect x="15.5" y="7" width="2" height="2" fill="#0000f0"/><rect x="5" y="13.5" width="2" height="2" fill="#0000f0"/><rect x="13" y="16" width="2" height="2" fill="#0000f0"/></svg>
<svg class="a" style="left:442px;top:66px" width="20" height="19" viewBox="0 0 20 19"><defs><linearGradient id="tm1" x1="0" y1="0" x2="1" y2="1"><stop offset="0" stop-color="#dadada"/><stop offset="1" stop-color="#b4b4b4"/></linearGradient></defs>
<path d="M0,0.5 H17 L19.5,9 L17,18.5 H4 L0,15 Z" fill="url(#tm1)"/><path d="M1.5,1 L18,8.5 L6,16 Z" fill="#f6f6f6"/>
<g fill="#555"><circle cx="3.5" cy="3" r="0.8"/><circle cx="6.5" cy="4.5" r="0.8"/><circle cx="5" cy="7.5" r="0.8"/><circle cx="9" cy="6.5" r="0.8"/><circle cx="12" cy="8" r="0.8"/><circle cx="8" cy="10" r="0.8"/><circle cx="11" cy="11" r="0.8"/><circle cx="6" cy="13.5" r="0.8"/><circle cx="15" cy="8.5" r="0.8"/></g></svg>
<svg class="a" style="left:478px;top:65px" width="21" height="21" viewBox="0 0 21 21"><rect width="21" height="21" fill="#fbfbfb"/><g fill="#5a5a5a"><circle cx="7" cy="2" r="1.1"/><circle cx="13" cy="2" r="1.1"/><circle cx="19" cy="1.5" r="1.1"/><circle cx="11.5" cy="5" r="1.1"/><circle cx="16.5" cy="4" r="1.1"/><circle cx="19.5" cy="6" r="1.1"/><circle cx="16" cy="8" r="1.1"/><circle cx="19" cy="11" r="1.1"/><circle cx="2" cy="12" r="1.1"/><circle cx="4" cy="15" r="1.1"/><circle cx="2" cy="19" r="1.1"/><circle cx="6" cy="18" r="1.1"/><circle cx="9" cy="19.5" r="1.1"/></g>
<path d="M7,15 L12,10 M7,15 L7,12.5 M7,15 L9.5,15 M12,10 L9.5,10 M12,10 L12,12.5" stroke="#888" stroke-width="0.9" fill="none"/></svg>
<svg class="a" style="left:515px;top:65px" width="21" height="21" viewBox="0 0 21 21"><rect width="21" height="21" fill="#fbfbfb"/><path d="M3.5,0.8 H20 V14 Z" fill="#b0b0b0"/><path d="M8,2 L14,7 L18,3 M12,2 L17,9 M10,4 L19,5" stroke="#e0e0e0" stroke-width="0.6" fill="none"/>
<g fill="#5a5a5a"><circle cx="2" cy="12" r="1.1"/><circle cx="4" cy="15" r="1.1"/><circle cx="2" cy="19" r="1.1"/><circle cx="6" cy="18" r="1.1"/><circle cx="9" cy="19.5" r="1.1"/></g>
<path d="M7,15 L12,10 M7,15 L7,12.5 M7,15 L9.5,15 M12,10 L9.5,10 M12,10 L12,12.5" stroke="#888" stroke-width="0.9" fill="none"/></svg>
<svg class="a" style="left:548px;top:60px" width="29" height="30" viewBox="0 0 29 30"><rect width="29" height="30" fill="#fbfbfb"/><g fill="#444"><circle cx="3" cy="14.5" r="1.2"/><circle cx="6.5" cy="19.5" r="1.2"/><circle cx="5" cy="25.5" r="1.2"/><circle cx="12" cy="24" r="1.2"/><circle cx="17.5" cy="26" r="1.2"/></g>
<path d="M13,18 L17,13" stroke="#aaa" stroke-width="0.8"/><rect x="17" y="2.5" width="10" height="10" fill="none" stroke="#777" stroke-width="1"/><circle cx="22" cy="7" r="3" fill="none" stroke="#888" stroke-width="1"/><circle cx="18" cy="11.5" r="1.5" fill="none" stroke="#777" stroke-width="0.9"/><path d="M26,3 L28,1" stroke="#777"/></svg>
<svg class="a" style="left:591px;top:66px" width="17" height="19" viewBox="0 0 17 19"><g font-family="Liberation Sans" font-weight="bold" font-size="10.5"><text x="-0.5" y="8.5" fill="#f01030">C</text><text x="8.5" y="8.5" fill="#f8a010">C</text><text x="-0.5" y="18.5" fill="#10a040">C</text><text x="8.5" y="18.5" fill="#2040e0">C</text></g></svg>
<svg class="a" style="left:628px;top:67px" width="16" height="16" viewBox="0 0 16 16"><defs><radialGradient id="pr1" cx="0.35" cy="0.35" r="0.7"><stop offset="0" stop-color="#f0b070"/><stop offset="1" stop-color="#b85a20"/></radialGradient></defs>
<path d="M9,4 L15.5,13 L9,14 Z" fill="#c86a30"/><rect x="3" y="1" width="8" height="8" rx="3" fill="#c87038"/><ellipse cx="7" cy="1.8" rx="4" ry="1.6" fill="#e0a070"/><circle cx="5.5" cy="10.5" r="5" fill="url(#pr1)"/></svg>
<svg class="a" style="left:658px;top:60px" width="30" height="30" viewBox="0 0 30 30"><rect width="30" height="30" fill="#1f3b5c"/><rect x="10" y="0" width="10" height="10" fill="#6b9bd1"/><rect x="0" y="10" width="10" height="10" fill="#6b9bd1"/><rect x="20" y="10" width="10" height="10" fill="#6b9bd1"/><rect x="10" y="20" width="10" height="10" fill="#6b9bd1"/></svg>
<svg class="a" style="left:697px;top:62px" width="26" height="27" viewBox="0 0 26 27"><g fill="#50c050"><circle cx="2" cy="3.5" r="1"/><circle cx="13" cy="1" r="1"/><circle cx="23" cy="1" r="1"/><circle cx="4.5" cy="8" r="1"/><circle cx="11" cy="7" r="1"/><circle cx="24" cy="7.5" r="1"/><circle cx="15.5" cy="10" r="1"/></g>
<path d="M7,2.5 L10,5.5 M10,2.5 L7,5.5 M17,3.5 L20,6.5 M20,3.5 L17,6.5" stroke="#e04040" stroke-width="0.9"/>
<text x="0.5" y="25.5" font-family="Liberation Sans" font-weight="bold" font-size="18" fill="#505050" textLength="24.5" lengthAdjust="spacingAndGlyphs">SOR</text></svg>
<svg class="a" style="left:746px;top:69px" width="18" height="14" viewBox="0 0 18 14"><circle cx="3" cy="5" r="2.2" fill="none" stroke="#501060" stroke-width="1.2"/><circle cx="5" cy="11" r="2.2" fill="none" stroke="#501060" stroke-width="1.2"/><path d="M5,6 L17,1 M7,9.5 L16,3" stroke="#7030a0" stroke-width="1"/><path d="M11,4 L17,4.5" stroke="#c090e0" stroke-width="0.8"/></svg>
<svg class="a" style="left:783px;top:65px" width="19" height="20" viewBox="0 0 19 20"><path d="M9.5,1 V19" stroke="#d00000" stroke-width="2"/><path d="M6,4.5 L9.5,0.5 L13,4.5 Z M6,15.5 L9.5,19.5 L13,15.5 Z" fill="#d00000"/>
<ellipse cx="8.5" cy="10" rx="7.5" ry="3" fill="none" stroke="#d00000" stroke-width="1.8"/><path d="M14,7 L18.5,10 L14,13 Z" fill="#d00000"/></svg>
<svg class="a" style="left:814px;top:60px" width="28" height="29" viewBox="0 0 28 29"><path d="M1,8 L8,1 H27 V21 L20,28 H1 Z" fill="#d8d8d8" stroke="#606060" stroke-width="1"/><path d="M1,8 H20 V28 M20,8 L27,1" fill="none" stroke="#606060" stroke-width="1"/>
<path d="M8,1 V21 H27 M8,21 L1,28" stroke="#a0a0a0" stroke-width="0.8" fill="none"/>
<path d="M2,19 L8,12 H26 L20,19 Z" fill="#e00000"/><path d="M20,12 H27 V15 L22,19 Z" fill="#e88888"/></svg>
<svg class="a" style="left:858px;top:67px" width="15" height="16" viewBox="0 0 15 16"><path d="M2,6 L12,13 M4,13 L7,2 L9,8 M3,11 L13,9" stroke="#606070" stroke-width="1.2" fill="none"/><g fill="#5a5af0"><circle cx="2" cy="6" r="1.5"/><circle cx="7" cy="1.5" r="1.5"/><circle cx="12.5" cy="13.5" r="1.5"/><circle cx="3.5" cy="13.5" r="1.5"/><circle cx="11" cy="7" r="1.5"/></g></svg>
<svg class="a" style="left:906px;top:66px" width="21" height="20" viewBox="0 0 21 20"><path d="M1,0 V18.5 H20.5" fill="none" stroke="#707070" stroke-width="1.1"/><path d="M-0.5,2 L1,0 L2.5,2" fill="none" stroke="#707070" stroke-width="0.8"/>
<rect x="1.5" y="10" width="3.5" height="8" fill="#8a8a8a"/><rect x="5" y="4.5" width="4" height="13.5" fill="#9a9a9a"/><rect x="9" y="6.5" width="3.5" height="11.5" fill="#e8e8e8" stroke="#a0a0a0" stroke-width="0.7"/><rect x="12.5" y="12.5" width="3.5" height="5.5" fill="#909090"/></svg>
<svg class="a" style="left:944px;top:66px" width="20" height="19" viewBox="0 0 20 19"><path d="M0.5,2.5 V18 H18.5" fill="none" stroke="#8a8a8a" stroke-width="0.9"/><path d="M1,8 C2,3 4,3 6,7 C9,14 11,17 17,17.5" fill="none" stroke="#8a8a8a" stroke-width="0.9"/>
<text x="6.5" y="7" font-family="Liberation Sans" font-size="7.5" fill="#9a9a9a">μ,σ</text></svg>
<svg class="a" style="left:980px;top:65px" width="21" height="21" viewBox="0 0 21 21"><text x="-0.5" y="6.5" font-family="Liberation Sans" font-size="8" fill="#8a8a8a">min</text><text x="5" y="20" font-family="Liberation Sans" font-size="8" fill="#9a9a9a">max</text>
<path d="M0.5,10.5 H19.5" stroke="#8a8a8a" stroke-width="2"/><path d="M2.5,7 V11 M16.5,10 V17" stroke="#777" stroke-width="0.8"/></svg>
<svg class="a" style="left:1019px;top:67px" width="19" height="18" viewBox="0 0 19 18"><defs><linearGradient id="tr1" x1="0" x2="1"><stop offset="0" stop-color="#777"/><stop offset="0.5" stop-color="#ccc"/><stop offset="1" stop-color="#888"/></linearGradient></defs>
<rect x="0" y="0" width="3.5" height="17" fill="url(#tr1)"/><path d="M5,2 H18.5 V4 H5 Z" fill="#9a9a9a"/><path d="M6,4 H17.5 L17,17.5 H6.5 Z" fill="#a8a8a8"/><path d="M8.5,6.5 V15 M11.5,6.5 V15 M14.5,6.5 V15" stroke="#e8e8e8" stroke-width="1"/></svg>
<svg class="a" style="left:1056px;top:67px" width="16" height="16" viewBox="0 0 16 16"><path d="M8,2 V14 M2,8 H14" stroke="#4a5e6e" stroke-width="3.8" stroke-linecap="round"/></svg>
<svg class="a" style="left:1095px;top:67px" width="12" height="16" viewBox="0 0 12 16"><rect x="0.5" y="0.5" width="11" height="15" rx="1" fill="#e4e4e4" stroke="#9a9a9a"/><rect x="2" y="2" width="8" height="2.5" fill="#a8a8a8"/><g fill="#9a9a9a"><rect x="2" y="6.5" width="2" height="1.5"/><rect x="5" y="6.5" width="2" height="1.5"/><rect x="8" y="6.5" width="2" height="1.5"/><rect x="2" y="9.5" width="2" height="1.5"/><rect x="5" y="9.5" width="2" height="1.5"/><rect x="8" y="9.5" width="2" height="1.5"/><rect x="2" y="12.5" width="2" height="1.5"/><rect x="5" y="12.5" width="2" height="1.5"/><rect x="8" y="12.5" width="2" height="1.5"/></g></svg>
<svg class="a" style="left:1126px;top:63px" width="24" height="24" viewBox="0 0 24 24"><defs><linearGradient id="sfr" x1="0" x2="1"><stop offset="0" stop-color="#2020f0"/><stop offset="0.25" stop-color="#00d0f0"/><stop offset="0.45" stop-color="#20e020"/><stop offset="0.65" stop-color="#f0f000"/><stop offset="0.85" stop-color="#f08000"/><stop offset="1" stop-color="#f00080"/></linearGradient></defs>
<rect width="24" height="24" fill="#fff"/><text x="3" y="12.5" font-family="Liberation Serif" font-weight="bold" font-size="14.5" fill="#000" textLength="18.5" lengthAdjust="spacingAndGlyphs">SF</text>
<rect x="1" y="14" width="22" height="4" fill="url(#sfr)"/><path d="M1.5,23 V19.5 H22.5 V23 M8,19.5 V22 M15,19.5 V22" fill="none" stroke="#000" stroke-width="1.1"/></svg>
<svg class="a" style="left:1175px;top:61px" width="30" height="28" viewBox="0 0 30 28"><text x="0" y="5.5" font-family="Liberation Sans" font-weight="bold" font-size="6.2" fill="#3a6ad0" textLength="29" lengthAdjust="spacingAndGlyphs">CANUPO</text>
<circle cx="7" cy="11" r="4.2" fill="none" stroke="#40a0e0" stroke-width="1"/><circle cx="7" cy="11" r="2.5" fill="none" stroke="#222" stroke-width="1.5" stroke-dasharray="1.5,1"/>
<path d="M11,11 H15 M14,10 L15.5,11 L14,12" stroke="#222" stroke-width="0.8" fill="none"/><path d="M17,11 L21,9" stroke="#40a0e0" stroke-width="2"/><path d="M18,17 L25,5" stroke="#80c060" stroke-width="0.8"/><circle cx="23.5" cy="12" r="1.8" fill="#e02020"/>
<rect x="3" y="15" width="10" height="2.5" rx="1.2" fill="#e04040"/><rect x="4.5" y="15.6" width="7" height="1.2" fill="#333"/>
<text x="6" y="27" font-family="Liberation Sans" font-style="italic" font-weight="bold" font-size="7.5" fill="#2a3040" textLength="22" lengthAdjust="spacingAndGlyphs">Create</text></svg>
<svg class="a" style="left:1211px;top:61px" width="30" height="28" viewBox="0 0 30 28"><text x="0.5" y="5.5" font-family="Liberation Sans" font-weight="bold" font-size="6.2" fill="#3a6ad0" textLength="29" lengthAdjust="spacingAndGlyphs">CANUPO</text>
<circle cx="5.5" cy="10" r="2.5" fill="none" stroke="#222" stroke-width="1.5" stroke-dasharray="1.5,1"/><path d="M2,15.3 H10" stroke="#222" stroke-width="1" stroke-dasharray="1,0.8"/>
<path d="M11.5,10 H16" stroke="#70a030" stroke-width="1.6"/><path d="M15,7.5 L18,10 L15,12.5 Z" fill="#70a030"/><circle cx="23" cy="10" r="2.5" fill="none" stroke="#30b0f0" stroke-width="1.3" stroke-dasharray="1.2,1"/><path d="M19,15.3 H28" stroke="#e02020" stroke-width="1" stroke-dasharray="1,0.8"/>
<text x="0" y="27" font-family="Liberation Sans" font-style="italic" font-weight="bold" font-size="7.5" fill="#2a3040" textLength="29" lengthAdjust="spacingAndGlyphs">Classify</text></svg>
<svg class="a" style="left:1262px;top:61px" width="30" height="28" viewBox="0 0 30 28"><defs><linearGradient id="rk1" x1="0" y1="0" x2="1" y2="1"><stop offset="0" stop-color="#e8f2f6"/><stop offset="1" stop-color="#b8ccd4"/></linearGradient></defs>
<path d="M3,17 L1,13 L4,7 L10,2 L17,0.5 L24,3 L28,12 L29,20 L24,27 L10,27.5 Z" fill="url(#rk1)"/><path d="M10,2 L13,8 L8,14 L4,7 M13,8 L19,6 L24,3 M19,6 L22,14 L28,12 M22,14 L17,20 L8,14 M17,20 L24,27 M17,20 L10,27.5" stroke="#9ab0b8" stroke-width="0.7" fill="none"/>
<path d="M12,3 L16,1.5 L20,3 L17,5 Z" fill="#fff"/><text x="2" y="26.5" font-family="Liberation Sans" font-weight="bold" font-size="11.5" fill="#000">Kd</text></svg>
<svg class="a" style="left:1299px;top:61px" width="30" height="28" viewBox="0 0 30 28"><defs><linearGradient id="rk2" x1="0" y1="0" x2="1" y2="1"><stop offset="0" stop-color="#e8f2f6"/><stop offset="1" stop-color="#b8ccd4"/></linearGradient></defs>
<path d="M3,17 L1,13 L4,7 L10,2 L17,0.5 L24,3 L28,12 L29,20 L24,27 L10,27.5 Z" fill="url(#rk2)"/><path d="M10,2 L13,8 L8,14 L4,7 M13,8 L19,6 L24,3 M19,6 L22,14 L28,12 M22,14 L17,20 L8,14 M17,20 L24,27 M17,20 L10,27.5" stroke="#9ab0b8" stroke-width="0.7" fill="none"/>
<path d="M12,3 L16,1.5 L20,3 L17,5 Z" fill="#fff"/><text x="1.5" y="26.5" font-family="Liberation Sans" font-weight="bold" font-size="11.5" fill="#000">FM</text></svg>
<svg class="a" style="left:1338px;top:60px" width="26" height="28" viewBox="0 0 26 28"><defs><linearGradient id="dc1" x1="0" y1="0" x2="1" y2="1"><stop offset="0" stop-color="#ffffff"/><stop offset="1" stop-color="#d0d0d0"/></linearGradient></defs>
<path d="M5,0.5 H15 L21,6.5 V27 H5 Z" fill="url(#dc1)" stroke="#b0b0b0" stroke-width="1"/><path d="M15,0.5 V6.5 H21" fill="#e8e8e8" stroke="#b0b0b0" stroke-width="0.8"/><rect x="0" y="10" width="18" height="10.5" fill="#707070"/><text x="1" y="18.5" font-family="Liberation Sans" font-size="9" fill="#f0f0f0" textLength="15.5" lengthAdjust="spacingAndGlyphs">SHP</text></svg>
<svg class="a" style="left:1375px;top:60px" width="26" height="28" viewBox="0 0 26 28"><defs><linearGradient id="dc2" x1="0" y1="0" x2="1" y2="1"><stop offset="0" stop-color="#ffffff"/><stop offset="1" stop-color="#d0d0d0"/></linearGradient></defs>
<path d="M5,0.5 H15 L21,6.5 V27 H5 Z" fill="url(#dc2)" stroke="#b0b0b0" stroke-width="1"/><path d="M15,0.5 V6.5 H21" fill="#e8e8e8" stroke="#b0b0b0" stroke-width="0.8"/><rect x="0" y="10" width="18" height="10.5" fill="#2a74f0"/><text x="1" y="18.5" font-family="Liberation Sans" font-size="9" fill="#f0f0f0" textLength="15.5" lengthAdjust="spacingAndGlyphs">CSV</text></svg>
<svg class="a" style="left:1414px;top:64px" width="22" height="22" viewBox="0 0 22 22"><path d="M11,11 L11.00,0.00 A11,11 0 0 1 18.78,3.22 Z" fill="#e0e0e0"/><path d="M11,11 L18.78,3.22 A11,11 0 0 1 22.00,11.00 Z" fill="#c8c8c8"/><path d="M11,11 L22.00,11.00 A11,11 0 0 1 18.78,18.78 Z" fill="#b0b0b0"/><path d="M11,11 L18.78,18.78 A11,11 0 0 1 11.00,22.00 Z" fill="#a0a0a0"/><path d="M11,11 L11.00,22.00 A11,11 0 0 1 3.22,18.78 Z" fill="#989898"/><path d="M11,11 L3.22,18.78 A11,11 0 0 1 0.00,11.00 Z" fill="#b8b8b8"/><path d="M11,11 L0.00,11.00 A11,11 0 0 1 3.22,3.22 Z" fill="#a8a8a8"/><path d="M11,11 L3.22,3.22 A11,11 0 0 1 11.00,0.00 Z" fill="#d0d0d0"/></svg>
<svg class="a" style="left:1447px;top:60px" width="30" height="30" viewBox="0 0 30 30"><circle cx="15" cy="15" r="14.3" fill="#fff" stroke="#222" stroke-width="1.3"/><ellipse cx="15" cy="15" rx="3" ry="14.3" fill="none" stroke="#333" stroke-width="0.8"/><ellipse cx="15" cy="15" rx="6.5" ry="14.3" fill="none" stroke="#333" stroke-width="0.8"/><ellipse cx="15" cy="15" rx="10" ry="14.3" fill="none" stroke="#333" stroke-width="0.8"/><path d="M4.78,5 H25.22" stroke="#333" stroke-width="0.8"/><path d="M2.02,9 H27.98" stroke="#333" stroke-width="0.8"/><path d="M0.84,13 H29.16" stroke="#333" stroke-width="0.8"/><path d="M0.84,17 H29.16" stroke="#333" stroke-width="0.8"/><path d="M2.02,21 H27.98" stroke="#333" stroke-width="0.8"/><path d="M4.78,25 H25.22" stroke="#333" stroke-width="0.8"/><path d="M15,0.7 V29.3" stroke="#222" stroke-width="1"/><ellipse cx="15" cy="2" rx="2.5" ry="1.5" fill="#222"/><ellipse cx="15" cy="28" rx="2.5" ry="1.5" fill="#222"/></svg>
<svg class="a" style="left:1501px;top:63px" width="25" height="24" viewBox="0 0 25 24"><defs><linearGradient id="nc1" x1="0" y1="0" x2="1" y2="1"><stop offset="0" stop-color="#80e060"/><stop offset="0.5" stop-color="#e8f060"/><stop offset="1" stop-color="#f0a0a0"/></linearGradient></defs>
<path d="M1,4 L7,0.5 L12,11 L6,15 Z" fill="url(#nc1)"/><path d="M7,8 L21,1.5" stroke="#e02020" stroke-width="1"/><path d="M18,0 L23,1 L19.5,4 Z" fill="#e02020"/>
<text x="0" y="23.5" font-family="Liberation Sans" font-weight="bold" font-size="17" fill="#444" textLength="24" lengthAdjust="spacingAndGlyphs">N+C</text></svg>
<svg class="a" style="left:1539px;top:63px" width="24" height="24" viewBox="0 0 24 24"><path d="M1,9 C3,4 6,7 9,6 C12,5 13,4 15,3 C17,2 19,7 22,4" fill="none" stroke="#e02020" stroke-width="1"/><g fill="#50c050"><circle cx="1" cy="4" r="1"/><circle cx="7" cy="3" r="1"/><circle cx="11.5" cy="1" r="1"/><circle cx="20" cy="1" r="1"/><circle cx="4" cy="8.5" r="1"/><circle cx="16" cy="5.5" r="1"/></g>
<text x="0" y="23.5" font-family="Liberation Sans" font-weight="bold" font-size="17" fill="#444" textLength="23" lengthAdjust="spacingAndGlyphs">MLS</text></svg>
<svg class="a" style="left:1588px;top:61px" width="18" height="28" viewBox="0 0 18 28"><path d="M1.5,0.5 V27.5" stroke="#444" stroke-width="1" stroke-dasharray="3.5,1.5,1,1.5"/><path d="M10.5,1 C4,4 3,9 8,13 C14,17 15,24 1.5,23" fill="none" stroke="#f01010" stroke-width="1.6"/></svg>
<svg class="a" style="left:1625px;top:61px" width="26" height="28" viewBox="0 0 26 28"><path d="M1.5,0.5 V27.5" stroke="#888" stroke-width="1" stroke-dasharray="3.5,1.5,1,1.5"/><path d="M11,1 C5,4 4,9 9,13 C14,17 15,24 1.5,22.5" fill="none" stroke="#a0a0a0" stroke-width="1.4"/>
<circle cx="15.5" cy="5" r="2.3" fill="#707070"/><circle cx="5.5" cy="15.5" r="2.3" fill="#a8a8a8"/><circle cx="21.5" cy="19.5" r="2.3" fill="#b8b8b8"/><path d="M8,5 H13 M8,15.5 H12 M14,19.5 H19" stroke="#b0b0b0" stroke-width="0.8" stroke-dasharray="1,1"/></svg>
<svg class="a" style="left:1662px;top:61px" width="26" height="28" viewBox="0 0 26 28"><path d="M10.5,4 V24 M25,4 V24" stroke="#a8a8a8" stroke-width="1"/><ellipse cx="17.75" cy="4" rx="7.25" ry="2.5" fill="none" stroke="#a8a8a8" stroke-width="1"/><ellipse cx="17.75" cy="24" rx="7.25" ry="2.5" fill="none" stroke="#a8a8a8" stroke-width="1"/><path d="M17.75,0 V28" stroke="#b8b8b8" stroke-width="0.8"/>
<path d="M21,10 C20,15 15,17 8,17" fill="none" stroke="#b0b0b0" stroke-width="3"/><path d="M0.5,16.5 L8,11 V22 Z" fill="#b0b0b0"/></svg>
<svg class="a" style="left:7px;top:112px" width="26" height="27" viewBox="0 0 26 27"><rect x="0.5" y="0.5" width="25" height="16" rx="1" fill="#3d5870"/><rect x="2.5" y="2.5" width="21" height="12" fill="#fff"/>
<path d="M6,14.5 A7,7 0 0 1 20,14.5 Z" fill="#50c0f0"/><g fill="#50c0f0"><rect x="11.5" y="5" width="3" height="3"/><rect x="6.5" y="7.5" width="3" height="3" transform="rotate(-45 8 9)"/><rect x="16.5" y="7.5" width="3" height="3" transform="rotate(45 18 9)"/></g><path d="M9.5,14.5 A3.5,3.5 0 0 1 16.5,14.5 Z" fill="#fff"/>
<rect x="0.5" y="16.5" width="25" height="4.5" fill="#e0e0e0"/><circle cx="13" cy="18.7" r="0.9" fill="#bbb"/><rect x="8" y="21" width="10" height="2.5" fill="#d0d8e0"/><rect x="5" y="23.5" width="16" height="2.5" rx="1" fill="#c8c8c8"/></svg>
<svg class="a" style="left:7px;top:150px" width="26" height="22" viewBox="0 0 26 22"><path d="M7,3 L9,0.5 H17 L19,3 Z" fill="#6a7698"/><rect x="0" y="3" width="26" height="18.5" rx="2" fill="#6a7698"/><rect x="3" y="1.5" width="1.5" height="2" fill="#333"/>
<circle cx="12.7" cy="10.5" r="7.7" fill="#30364a"/><circle cx="12.7" cy="10.5" r="5" fill="#6a80d0"/><circle cx="13.5" cy="9.7" r="1.3" fill="#3a60e0"/><circle cx="12.3" cy="10.7" r="0.7" fill="#e04060"/><circle cx="22.7" cy="7" r="1.3" fill="#f0c020"/></svg>
<svg class="a" style="left:13px;top:190px" width="15" height="12" viewBox="0 0 15 12"><text x="0" y="10.5" font-family="Liberation Serif" font-weight="bold" font-size="12" fill="#000" textLength="14" lengthAdjust="spacingAndGlyphs">1:1</text><path d="M1,10.8 H3 M6,10.8 H7 M11,10.8 H13" stroke="#d000d0" stroke-width="0.8"/></svg>
<svg class="a" style="left:12px;top:224px" width="18" height="18" viewBox="0 0 18 18"><path d="M8.5,0 V17 M0,8.5 H17" stroke="#111" stroke-width="1.2"/></svg>
<div class="a" style="left:2px;top:251px;width:37px;height:35px;background:#cce4f7;border:1px solid #99c9ef"></div>
<svg class="a" style="left:10px;top:256px" width="20" height="26" viewBox="0 0 20 26"><path d="M10,1 V16 M2.5,8.5 H17.5" stroke="#111" stroke-width="1.2"/><text x="0" y="23" font-family="Liberation Sans" font-weight="bold" font-size="10" fill="#e00000" textLength="20" lengthAdjust="spacingAndGlyphs">auto</text></svg>
<svg class="a" style="left:5px;top:292px" width="30" height="25" viewBox="0 0 30 25"><path d="M12,1 L1.5,12.5 L12,24 Z" fill="#c0c0c0" stroke="#222" stroke-width="1.6" stroke-linejoin="round"/><path d="M13,16 C17,17 22,15 25,11" fill="none" stroke="#333" stroke-width="1.6"/><path d="M22,8 L29,7 L26.5,13.5 Z" fill="#333"/></svg>
<svg class="a" style="left:6px;top:327px" width="31" height="30" viewBox="0 0 31 30"><path d="M1,6 L6,1 H23 V22 L18,27 H1 Z" fill="#b8b8e0"/><path d="M1,6 H18 V27 H1 Z" fill="#a8a8d8"/><path d="M1,6 L6,1 V22 L1,27 Z" fill="#8888c0"/><path d="M6,22 H23 L18,27 H1 Z" fill="#8080b8"/><path d="M6,1 H23 V22 H6 Z" fill="#d0d0f0" opacity="0.7"/>
<path d="M22,25 H30 L26,29 Z" fill="#000"/></svg>
<svg class="a" style="left:7px;top:363px" width="30" height="27" viewBox="0 0 30 27"><ellipse cx="12.5" cy="12.5" rx="11" ry="6" fill="none" stroke="#f0a0a0" stroke-width="0.9"/><ellipse cx="12.5" cy="12.5" rx="6" ry="11" fill="none" stroke="#a0e0a0" stroke-width="0.9"/><ellipse cx="12.5" cy="12.5" rx="11" ry="9" fill="none" stroke="#a0c8f0" stroke-width="0.9"/>
<path d="M12.5,3 V22 M3,12.5 H22" stroke="#000" stroke-width="1.8"/><path d="M9.5,6 L12.5,2 L15.5,6 Z M9.5,19 L12.5,23 L15.5,19 Z M6,9.5 L2,12.5 L6,15.5 Z M19,9.5 L23,12.5 L19,15.5 Z" fill="#000"/>
<path d="M21,22 H29 L25,26 Z" fill="#000"/></svg>
<svg class="a" style="left:6px;top:399px" width="28" height="28" viewBox="0 0 28 28"><circle cx="11" cy="11" r="9" fill="#b0e4ec" stroke="#3a5060" stroke-width="3"/><circle cx="8" cy="7" r="2" fill="#fff" opacity="0.8"/><circle cx="12" cy="16" r="1" fill="#fff" opacity="0.7"/><path d="M18,18 L25.5,25.5" stroke="#3a5060" stroke-width="4" stroke-linecap="round"/></svg>
<svg class="a" style="left:10px;top:440px" width="20" height="19" viewBox="0 0 20 19"><path d="M1,5 L5,1 H19 V14 L15,18 H1 Z" fill="#fff"/><path d="M1,5 L5,1 H19 L15,5 Z" fill="#f0a060"/><path d="M1,5 L5,1 H19 V14 L15,18 H1 Z M1,5 H15 V18 M15,5 L19,1 M5,1 V14 H19 M5,14 L1,18" fill="none" stroke="#222" stroke-width="0.9"/></svg>
<svg class="a" style="left:10px;top:476px" width="20" height="19" viewBox="0 0 20 19"><path d="M1,5 L5,1 H19 V14 L15,18 H1 Z" fill="#fff"/><path d="M1,5 H15 V18 H1 Z" fill="#f09850"/><path d="M1,5 L5,1 H19 V14 L15,18 H1 Z M1,5 H15 V18 M15,5 L19,1 M5,1 V14 H19 M5,14 L1,18" fill="none" stroke="#222" stroke-width="0.9"/></svg>
<svg class="a" style="left:10px;top:512px" width="20" height="19" viewBox="0 0 20 19"><path d="M1,5 L5,1 H19 V14 L15,18 H1 Z" fill="#fff"/><path d="M1,5 L5,1 V14 L1,18 Z" fill="#f09850"/><path d="M1,5 L5,1 H19 V14 L15,18 H1 Z M1,5 H15 V18 M15,5 L19,1 M5,1 V14 H19 M5,14 L1,18" fill="none" stroke="#222" stroke-width="0.9"/></svg>
<svg class="a" style="left:10px;top:548px" width="20" height="19" viewBox="0 0 20 19"><path d="M1,5 L5,1 H19 V14 L15,18 H1 Z" fill="#fff"/><path d="M5,1 H19 V14 H5 Z" fill="#f09850"/><path d="M1,5 L5,1 H19 V14 L15,18 H1 Z M1,5 H15 V18 M15,5 L19,1 M5,1 V14 H19 M5,14 L1,18" fill="none" stroke="#222" stroke-width="0.9"/></svg>
<svg class="a" style="left:10px;top:584px" width="20" height="19" viewBox="0 0 20 19"><path d="M1,5 L5,1 H19 V14 L15,18 H1 Z" fill="#fff"/><path d="M15,5 L19,1 V14 L15,18 Z" fill="#f09850"/><path d="M1,5 L5,1 H19 V14 L15,18 H1 Z M1,5 H15 V18 M15,5 L19,1 M5,1 V14 H19 M5,14 L1,18" fill="none" stroke="#222" stroke-width="0.9"/></svg>
<svg class="a" style="left:10px;top:620px" width="20" height="19" viewBox="0 0 20 19"><path d="M1,5 L5,1 H19 V14 L15,18 H1 Z" fill="#fff"/><path d="M1,18 L5,14 H19 L15,18 Z" fill="#f09850"/><path d="M1,5 L5,1 H19 V14 L15,18 H1 Z M1,5 H15 V18 M15,5 L19,1 M5,1 V14 H19 M5,14 L1,18" fill="none" stroke="#222" stroke-width="0.9"/></svg>
<svg class="a" style="left:7px;top:650px" width="26" height="30" viewBox="0 0 26 30"><path d="M13,1 L25,7 V22 L13,29 L1,22 V7 Z" fill="#e88a40"/><path d="M13,1 L25,7 L13,14 L1,7 Z" fill="#f4a868"/><path d="M13,14 V29 L25,22 V7 Z" fill="#d87a30"/><path d="M13,1 L25,7 V22 L13,29 L1,22 V7 Z M1,7 L13,14 L25,7 M13,14 V29" fill="none" stroke="#a05820" stroke-width="0.6"/>
<text x="13" y="11.5" text-anchor="middle" font-family="Liberation Sans" font-weight="bold" font-size="10" fill="#222" textLength="26" lengthAdjust="spacingAndGlyphs">FRONT</text></svg>
<svg class="a" style="left:7px;top:686px" width="26" height="30" viewBox="0 0 26 30"><path d="M13,1 L25,7 V22 L13,29 L1,22 V7 Z" fill="#e88a40"/><path d="M13,1 L25,7 L13,14 L1,7 Z" fill="#f4a868"/><path d="M13,14 V29 L25,22 V7 Z" fill="#d87a30"/><path d="M13,1 L25,7 V22 L13,29 L1,22 V7 Z M1,7 L13,14 L25,7 M13,14 V29" fill="none" stroke="#a05820" stroke-width="0.6"/>
<text x="13" y="11.5" text-anchor="middle" font-family="Liberation Sans" font-weight="bold" font-size="10" fill="#222" textLength="26" lengthAdjust="spacingAndGlyphs">BACK</text></svg>
<div class="a" style="left:5px;top:722px;width:30px;height:30px;border:1px solid #b8c0c8;border-radius:3px;background:linear-gradient(#f4f6f8,#dde2e8)"></div>
<svg class="a" style="left:8px;top:732px" width="24" height="10" viewBox="0 0 24 10"><circle cx="6.5" cy="5" r="4" fill="#4a70c8"/><circle cx="17.5" cy="5" r="4" fill="#f04090"/></svg>
<svg class="a" style="left:1884px;top:110px" width="30" height="30" viewBox="0 0 30 30"><circle cx="15" cy="15" r="12.8" fill="none" stroke="#6a6a6a" stroke-width="4.4"/><circle cx="15" cy="15" r="12.8" fill="none" stroke="#8a8a8a" stroke-width="2.6"/><path d="M5,21 L25,9" stroke="#6a6a6a" stroke-width="5"/><path d="M5,21 L25,9" stroke="#8a8a8a" stroke-width="3"/></svg>
<svg class="a" style="left:1889px;top:151px" width="21" height="21" viewBox="0 0 21 21"><rect width="21" height="21" fill="#7c7c7c"/><ellipse cx="8" cy="9" rx="5" ry="5.5" fill="#8c8c8c"/><ellipse cx="12" cy="10" rx="4" ry="6" fill="#a8a8a8"/><ellipse cx="13" cy="11" rx="2.5" ry="4" fill="#c4c4c4"/><circle cx="18" cy="2" r="1" fill="#ccc"/>
<text x="1" y="20" font-family="Liberation Mono" font-weight="bold" font-size="8" fill="#fff" textLength="14" lengthAdjust="spacingAndGlyphs">EDL</text></svg>
<svg class="a" style="left:1889px;top:187px" width="21" height="21" viewBox="0 0 21 21"><rect width="21" height="21" fill="#7c7c7c"/><ellipse cx="8" cy="9" rx="5" ry="5.5" fill="#8c8c8c"/><ellipse cx="12" cy="10" rx="4" ry="6" fill="#a8a8a8"/><ellipse cx="13" cy="11" rx="2.5" ry="4" fill="#c4c4c4"/><circle cx="18" cy="2" r="1" fill="#ccc"/>
<text x="1" y="20" font-family="Liberation Mono" font-weight="bold" font-size="8" fill="#fff" textLength="19" lengthAdjust="spacingAndGlyphs">SSAO</text></svg>
<svg class="a" style="left:1884px;top:233px" width="29" height="29" viewBox="0 0 29 29"><defs><linearGradient id="cl1" x1="0" y1="0" x2="1" y2="1"><stop offset="0" stop-color="#909090"/><stop offset="0.5" stop-color="#d8d8d8"/><stop offset="1" stop-color="#888"/></linearGradient></defs>
<path d="M1,5 L27,0.5 L28,5.5 L2,10 Z" fill="#6a6a6a"/><path d="M5,4.3 L8,9.3 M11,3.3 L14,8.3 M17,2.3 L20,7.3 M23,1.3 L26,6.3" stroke="#e8e8e8" stroke-width="2.2"/>
<rect x="1" y="11" width="27" height="17.5" fill="url(#cl1)"/><rect x="1" y="11" width="27" height="2.5" fill="#7a7a7a"/></svg>
<svg class="a" style="left:1892px;top:267px" width="16" height="32" viewBox="0 0 16 32"><rect x="6.5" y="0" width="2" height="17" fill="#b07030"/><path d="M3,16 H12 L15,29 L1,29 Z" fill="#d89850"/><path d="M4,20 V28 M7,19 V28 M10,19 V28 M13,21 V28" stroke="#9a6020" stroke-width="0.9"/><path d="M0,30 H16" stroke="#b07030" stroke-width="1.5"/></svg>
<svg class="a" style="left:1887px;top:307px" width="25" height="24" viewBox="0 0 25 24"><rect x="0.8" y="0.8" width="23.4" height="22.4" rx="2.5" fill="#fff" stroke="#3a4656" stroke-width="1.6"/><circle cx="12.5" cy="12" r="9" fill="#fff" stroke="#3a4656" stroke-width="1.8"/><path d="M8,6 V18 M11,4.5 V19.5 M14,4.5 V19.5 M17,6 V18" stroke="#c8c8c8" stroke-width="0.7"/><path d="M12.5,12 L18,6 L13.8,13.2 Z" fill="#e83030"/><path d="M12.5,12 L7,18 L11.2,10.8 Z" fill="#222"/></svg>
<svg class="a" style="left:1888px;top:343px" width="23" height="25" viewBox="0 0 23 25"><defs><radialGradient id="sh1" cx="0.5" cy="0.4" r="0.6"><stop offset="0" stop-color="#606060"/><stop offset="1" stop-color="#a0a0a0"/></radialGradient></defs>
<path d="M11.5,0.5 L22,4 L21,13 C19,19 15,22 11.5,24 C8,22 4,19 2,13 L1,4 Z" fill="#c8c8c8" stroke="#b0b0b0" stroke-width="0.8"/><path d="M11.5,3.5 L19,6 L18.5,13 C17,17 14,19.5 11.5,21 C9,19.5 6,17 4.5,13 L4,6 Z" fill="url(#sh1)"/></svg>
<svg class="a" style="left:1884px;top:376px" width="30" height="30" viewBox="0 0 30 30"><rect width="30" height="30" fill="#fff"/><path d="M14,3 A12,12 0 1 0 14,27 Z" fill="#1a4fa0"/><rect x="11" y="2" width="17.5" height="26" rx="5" fill="none" stroke="#1a4fa0" stroke-width="1.6"/><path d="M14,3 A12,12 0 0 1 14,27" fill="none" stroke="#1a4fa0" stroke-width="1.6"/>
<text x="13" y="20" font-family="Liberation Sans" font-size="11" fill="#1a4fa0" textLength="13" lengthAdjust="spacingAndGlyphs">SF</text></svg>
<svg class="a" style="left:1892px;top:415px" width="14" height="24" viewBox="0 0 14 24"><path d="M1,3.5 H10" stroke="#1a1a90" stroke-width="1.8"/><path d="M9,0.5 L13.5,3.5 L9,6.5 Z" fill="#1a1a90"/><text x="0" y="23.5" font-family="Liberation Sans" font-weight="bold" font-size="17" fill="#10108a" textLength="13.5" lengthAdjust="spacingAndGlyphs">N</text></svg>
<svg class="a" style="left:1889px;top:453px" width="21" height="21" viewBox="0 0 21 21"><rect width="21" height="21" fill="#fff"/><path d="M5,2 L12,0.5 L18,4 L17.5,11 L12,15 L5,14 L2,8 Z" fill="#a8a8a8"/><path d="M5,2 L9,7 L12,0.5 M9,7 L17.5,6 M9,7 L7,14 M2,8 L9,7" stroke="#d8d8d8" stroke-width="0.8" fill="none"/>
<text x="0.5" y="20" font-family="Liberation Sans" font-weight="bold" font-size="7.5" fill="#000" textLength="18" lengthAdjust="spacingAndGlyphs">HPR</text></svg>
<svg class="a" style="left:1884px;top:484px" width="29" height="30" viewBox="0 0 29 30"><text x="0.5" y="9" font-family="Liberation Sans" font-weight="bold" font-size="9.5" fill="#b0b0b0" textLength="27" lengthAdjust="spacingAndGlyphs">M3C2</text>
<path d="M2,17 L24,12 C27,11 28,17 25,19 L5,25 C2,26 0,20 2,17 Z" fill="none" stroke="#c8c8c8" stroke-width="1"/><path d="M20,13 C23,13 23,20 21,20" fill="none" stroke="#c8c8c8" stroke-width="0.8"/>
<g fill="#666"><circle cx="4" cy="14" r="1.2"/><circle cx="8" cy="17" r="1.2"/><circle cx="3" cy="20" r="1.2"/><circle cx="7" cy="23" r="1.2"/><circle cx="19" cy="12" r="1.2"/><circle cx="23" cy="13" r="1.2"/><circle cx="20" cy="17" r="1.2"/><circle cx="25" cy="17" r="1.2"/><circle cx="27" cy="22" r="1.2"/><circle cx="6" cy="27" r="1.2"/><circle cx="14" cy="19" r="1.2"/></g></svg>
<svg class="a" style="left:1889px;top:525px" width="21" height="21" viewBox="0 0 21 21"><rect width="21" height="21" fill="#505050"/><ellipse cx="7" cy="7" rx="6" ry="5" fill="#a0a0a0"/><ellipse cx="15" cy="7" rx="5" ry="6" fill="#909090"/><path d="M3,5 C6,3 9,7 11,4 M13,3 C16,6 18,4 19,8" stroke="#d0d0d0" stroke-width="0.8" fill="none"/>
<rect x="0" y="12" width="21" height="9" fill="#333"/><text x="1" y="20.5" font-family="Liberation Mono" font-weight="bold" font-size="9" fill="#fff" textLength="19" lengthAdjust="spacingAndGlyphs">PCV</text></svg>
<svg class="a" style="left:1889px;top:560px" width="21" height="21" viewBox="0 0 21 21"><rect width="21" height="21" fill="#fff"/><path d="M10.5,1 L19.5,7.5 L16,18.5 H5 L1.5,7.5 Z" fill="#7a9a40" stroke="#604020" stroke-width="0.8"/><path d="M10.5,5 L15.5,8.5 L13.5,14.5 H7.5 L5.5,8.5 Z" fill="#60a040" stroke="#3a5a20" stroke-width="0.7"/><path d="M10.5,1 V5 M19.5,7.5 L15.5,8.5 M16,18.5 L13.5,14.5 M5,18.5 L7.5,14.5 M1.5,7.5 L5.5,8.5" stroke="#3a5a20" stroke-width="0.7"/><path d="M10.5,1 L19.5,7.5 L15.5,8.5 L10.5,5 Z" fill="#a07a40"/></svg>
<svg class="a" style="left:1889px;top:597px" width="21" height="21" viewBox="0 0 21 21"><rect width="21" height="21" fill="#fff"/><path d="M1,9 L8,3 L20,6 L18,13 L3,14 Z" fill="#30e030"/><path d="M8,3 L20,6 L16,12 Z" fill="#f030c0"/><path d="M1,9 L6,14 L3,14 Z" fill="#30c0f0"/><circle cx="12" cy="5" r="4.5" fill="#9030d0"/><circle cx="11" cy="4" r="2" fill="#c080f0"/>
<text x="0.5" y="20.5" font-family="Liberation Sans" font-weight="bold" font-size="8" fill="#000" textLength="20" lengthAdjust="spacingAndGlyphs">RSD</text></svg>
<svg class="a" style="left:1884px;top:633px" width="30" height="20" viewBox="0 0 30 20"><ellipse cx="15" cy="10" rx="13.5" ry="7.5" fill="none" stroke="#e04858" stroke-width="1.6"/><g fill="#fff" stroke="#e04858" stroke-width="1"><circle cx="15" cy="2.5" r="1.7"/><circle cx="15" cy="17.5" r="1.7"/><circle cx="1.5" cy="10" r="1.7"/><circle cx="28.5" cy="10" r="1.7"/></g></svg>

</body></html>
